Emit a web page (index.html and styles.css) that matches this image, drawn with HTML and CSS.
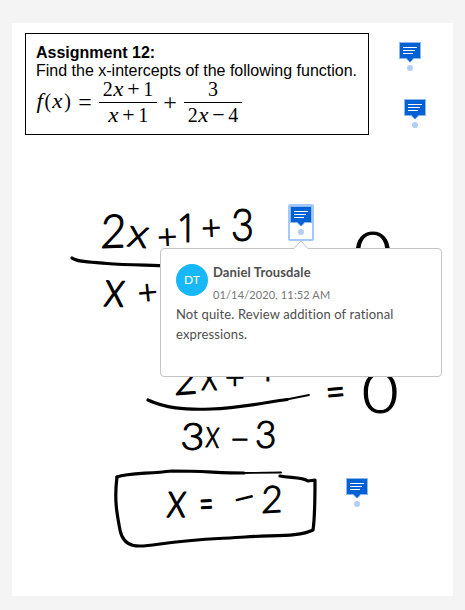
FILE: index.html
```html
<!DOCTYPE html>
<html lang="en">
<head>
<meta charset="utf-8">
<title>Assignment 12</title>
<link rel="stylesheet" href="styles.css">
</head>
<body>
<svg class="defs" width="0" height="0" aria-hidden="true">
  <symbol id="note" viewBox="0 0 22 29">
    <path d="M0 0H22V17H15L11 20.5L7 17H0Z" fill="#8fb8ee"/>
    <path d="M1 1H21V16H14.5L11 20L7.500 16H1Z" fill="#0061d5"/>
    <path d="M4 5.500H18M4 8.500H16M4 11.500H14" stroke="#fff" stroke-width="1"/>
    <circle cx="11" cy="26" r="3" fill="#b2cff3"/>
  </symbol>
</svg>
<main class="sheet">
  <section class="question">
    <h1>Assignment 12:</h1>
    <p>Find the x-intercepts of the following function.</p>
    <div class="formula">
      <span class="lhs"><i>f</i>(<i>x</i>)</span><span class="op eq">=</span>
      <span class="frac first"><span>2<i>x</i><b>+</b>1</span><span><i>x</i><b>+</b>1</span></span>
      <span class="op plus">+</span>
      <span class="frac second"><span>3</span><span>2<i>x</i><b>−</b>4</span></span>
    </div>
  </section>

  <svg class="ink" viewBox="12 23 441 573">
    <g class="hand">
      <text class="digit" transform="translate(100 248) rotate(-2) skewX(-4) scale(.96 1)">2</text>
      <text class="letter" transform="translate(126 246) rotate(6) skewX(-4) scale(1 .92)">x</text>
      <text class="sign" transform="translate(158 249) rotate(-3)">+</text>
      <text class="one" transform="translate(177 242) scale(.9 1)">1</text>
      <text class="sign" transform="translate(202 240) rotate(-3)">+</text>
      <text class="digit" transform="translate(231 241) scale(.86 1)">3</text>
      <text class="letter" transform="translate(103 306) rotate(2) skewX(-3) scale(1 1.16)">x</text>
      <text class="sign" transform="translate(139 305) rotate(-6)">+</text>
      <text class="zero" transform="translate(354 273) scale(1.12 1)">0</text>
      <text class="digit" transform="translate(174 395) rotate(-4) skewX(-6) scale(.9 1)">2</text>
      <text class="letter" transform="translate(201 390) scale(.8 1)">x</text>
      <text class="sign" transform="translate(225 389)">+</text>
      <text class="one" transform="translate(257 381) scale(.9 1)">1</text>
      <text class="equals" transform="translate(327 407) rotate(-5) scale(1.05 1.3)">=</text>
      <text class="zero" transform="translate(362 413) scale(1.08 1)">0</text>
      <text class="small digit" transform="translate(180 449) rotate(3) scale(1.12 1)">3</text>
      <text class="letter" transform="translate(205 447) rotate(3) scale(.68 .9)">x</text>
      <text class="sign" transform="translate(230 451)">−</text>
      <text class="small digit" transform="translate(255 448)">3</text>
      <text class="letter" transform="translate(166 517) skewX(-4) scale(.94 1.14)">x</text>
      <text class="equals" transform="translate(200 519) rotate(-3) scale(.76 1.35)">=</text>
      <text class="sign" transform="translate(236 512) rotate(-14) scale(1.15 1)">−</text>
      <text class="small digit" transform="translate(261 513) rotate(-3) skewX(-4)">2</text>
    </g>
    <g class="strokes">
      <path d="M72 258C77 262 90 262 107 263.500C126 265 146 265 170 266"/>
      <path d="M148 400C165 408 184 410 211 409C240 408 268 402 287 399.500"/>
      <path class="taper" d="M284 400L309 395"/>
      <path d="M117 477C114 500 117 514 120 530C124 550 140 547 160 544C195 539 215 539 245 537C275 535 299 537 313 530C315 517 315 503 315 480L308 481C302 477 291 478 280 476"/>
      <path d="M117 477C128 473 145 474 172 471C205 471 218 473 244 473"/>
      <path class="taper" d="M240 473L281 472.500"/>
    </g>
  </svg>

  <svg class="note n1" viewBox="0 0 22 29"><use href="#note"/></svg>
  <svg class="note n2" viewBox="0 0 22 29"><use href="#note"/></svg>
  <div class="selected"><svg class="pin" viewBox="0 0 22 29"><use href="#note"/></svg></div>
  <svg class="note n3" viewBox="0 0 22 29"><use href="#note"/></svg>

  <article class="comment">
    <svg class="caret" viewBox="0 0 16 9"><path d="M0.500 9L8 1L15.500 9" fill="#fff" stroke="#c4c4c4"/></svg>
    <header>
      <span class="avatar">DT</span>
      <div>
        <strong>Daniel Trousdale</strong>
        <time>01/14/2020, 11:52 AM</time>
      </div>
    </header>
    <p>Not quite. Review addition of rational expressions.</p>
  </article>
</main>
</body>
</html>
```

FILE: styles.css
```css
* { box-sizing: border-box; }
body { margin: 0; padding: 23px 12px 14px; height: 610px; background: #f4f4f4; overflow: hidden; }
.defs { position: absolute; }
.sheet { position: relative; height: 573px; padding: 10px 0 0 13px; background: #fff; }

.question { width: 344px; height: 102px; border: 1px solid #000; padding: 10px 0 0 10px; font: 16px/18px "Liberation Sans", Arial, sans-serif; color: #000; }
.question h1 { margin: 0; font-size: 16px; line-height: 18px; }
.question p { margin: 0; white-space: nowrap; }
.formula { display: flex; align-items: center; height: 46px; font: 20px/26px "Liberation Serif", "Times New Roman", serif; }
.formula i { display: inline-block; transform: scaleX(1.15); margin: 0 1px; }
.lhs { width: 37px; letter-spacing: 1px; white-space: nowrap; padding-bottom: 5px; }
.op { font-size: 24px; width: 16px; text-align: center; padding-bottom: 3px; }
.eq { margin-left: 4px; }
.frac { display: grid; grid-template-rows: 22px 24px; text-align: center; margin-left: 6px; }
.frac > span { line-height: 18px; white-space: nowrap; }
.frac > span:last-child { border-top: 1px solid #000; line-height: 24px; }
.frac b { font-weight: 400; font-size: 22px; margin: 0 3.5px; line-height: 1px; }
.first { width: 58px; }
.plus { margin-left: 5px; }
.second { width: 58px; }

.ink { position: absolute; inset: 0; width: 441px; height: 573px; }
.hand { font-family: Lato, sans-serif; font-weight: 300; fill: #000; stroke: #000; stroke-width: 1.1; stroke-linejoin: round; }
.digit { font-size: 46px; }
.small { font-size: 37px; }
.letter { font-size: 44px; }
.sign { font-size: 34px; }
.one { font-family: "Open Sans", sans-serif; font-size: 39px; }
.zero { font-size: 58px; }
.equals { font-size: 32px; }
.strokes path { fill: none; stroke: #000; stroke-width: 3.2; stroke-linecap: round; stroke-linejoin: round; }
.strokes .taper { stroke-width: 1.8; }

.note { position: absolute; width: 22px; height: 29px; }
.n1 { left: 387px; top: 19px; }
.n2 { left: 392px; top: 76px; }
.n3 { left: 334px; top: 455px; }
.selected { position: absolute; left: 276px; top: 181px; width: 26px; height: 37px; border: 2px solid #a6c8ff; border-radius: 2px; background: #fff; }
.pin { display: block; width: 22px; height: 29px; }

.comment { position: absolute; left: 148px; top: 225px; width: 282px; height: 129px; padding: 15px; border: 1px solid #c4c4c4; border-radius: 4px; background: #fff; font: 13px/20px Lato, sans-serif; color: #4e4e4e; }
.caret { position: absolute; left: 132px; top: -9px; width: 16px; height: 9px; }
.comment header { display: flex; gap: 5px; height: 40px; }
.avatar { width: 32px; height: 32px; border-radius: 50%; background: #18b7f7; color: #fff; font-size: 12px; line-height: 32px; text-align: center; }
.comment strong { display: block; line-height: 16px; margin-bottom: 7px; letter-spacing: 0.13px; color: #4e4e4e; }
.comment time { display: block; font-size: 11px; line-height: 16px; letter-spacing: 0.13px; color: #767676; }
.comment p { margin: 0; letter-spacing: 0.13px; }
```
